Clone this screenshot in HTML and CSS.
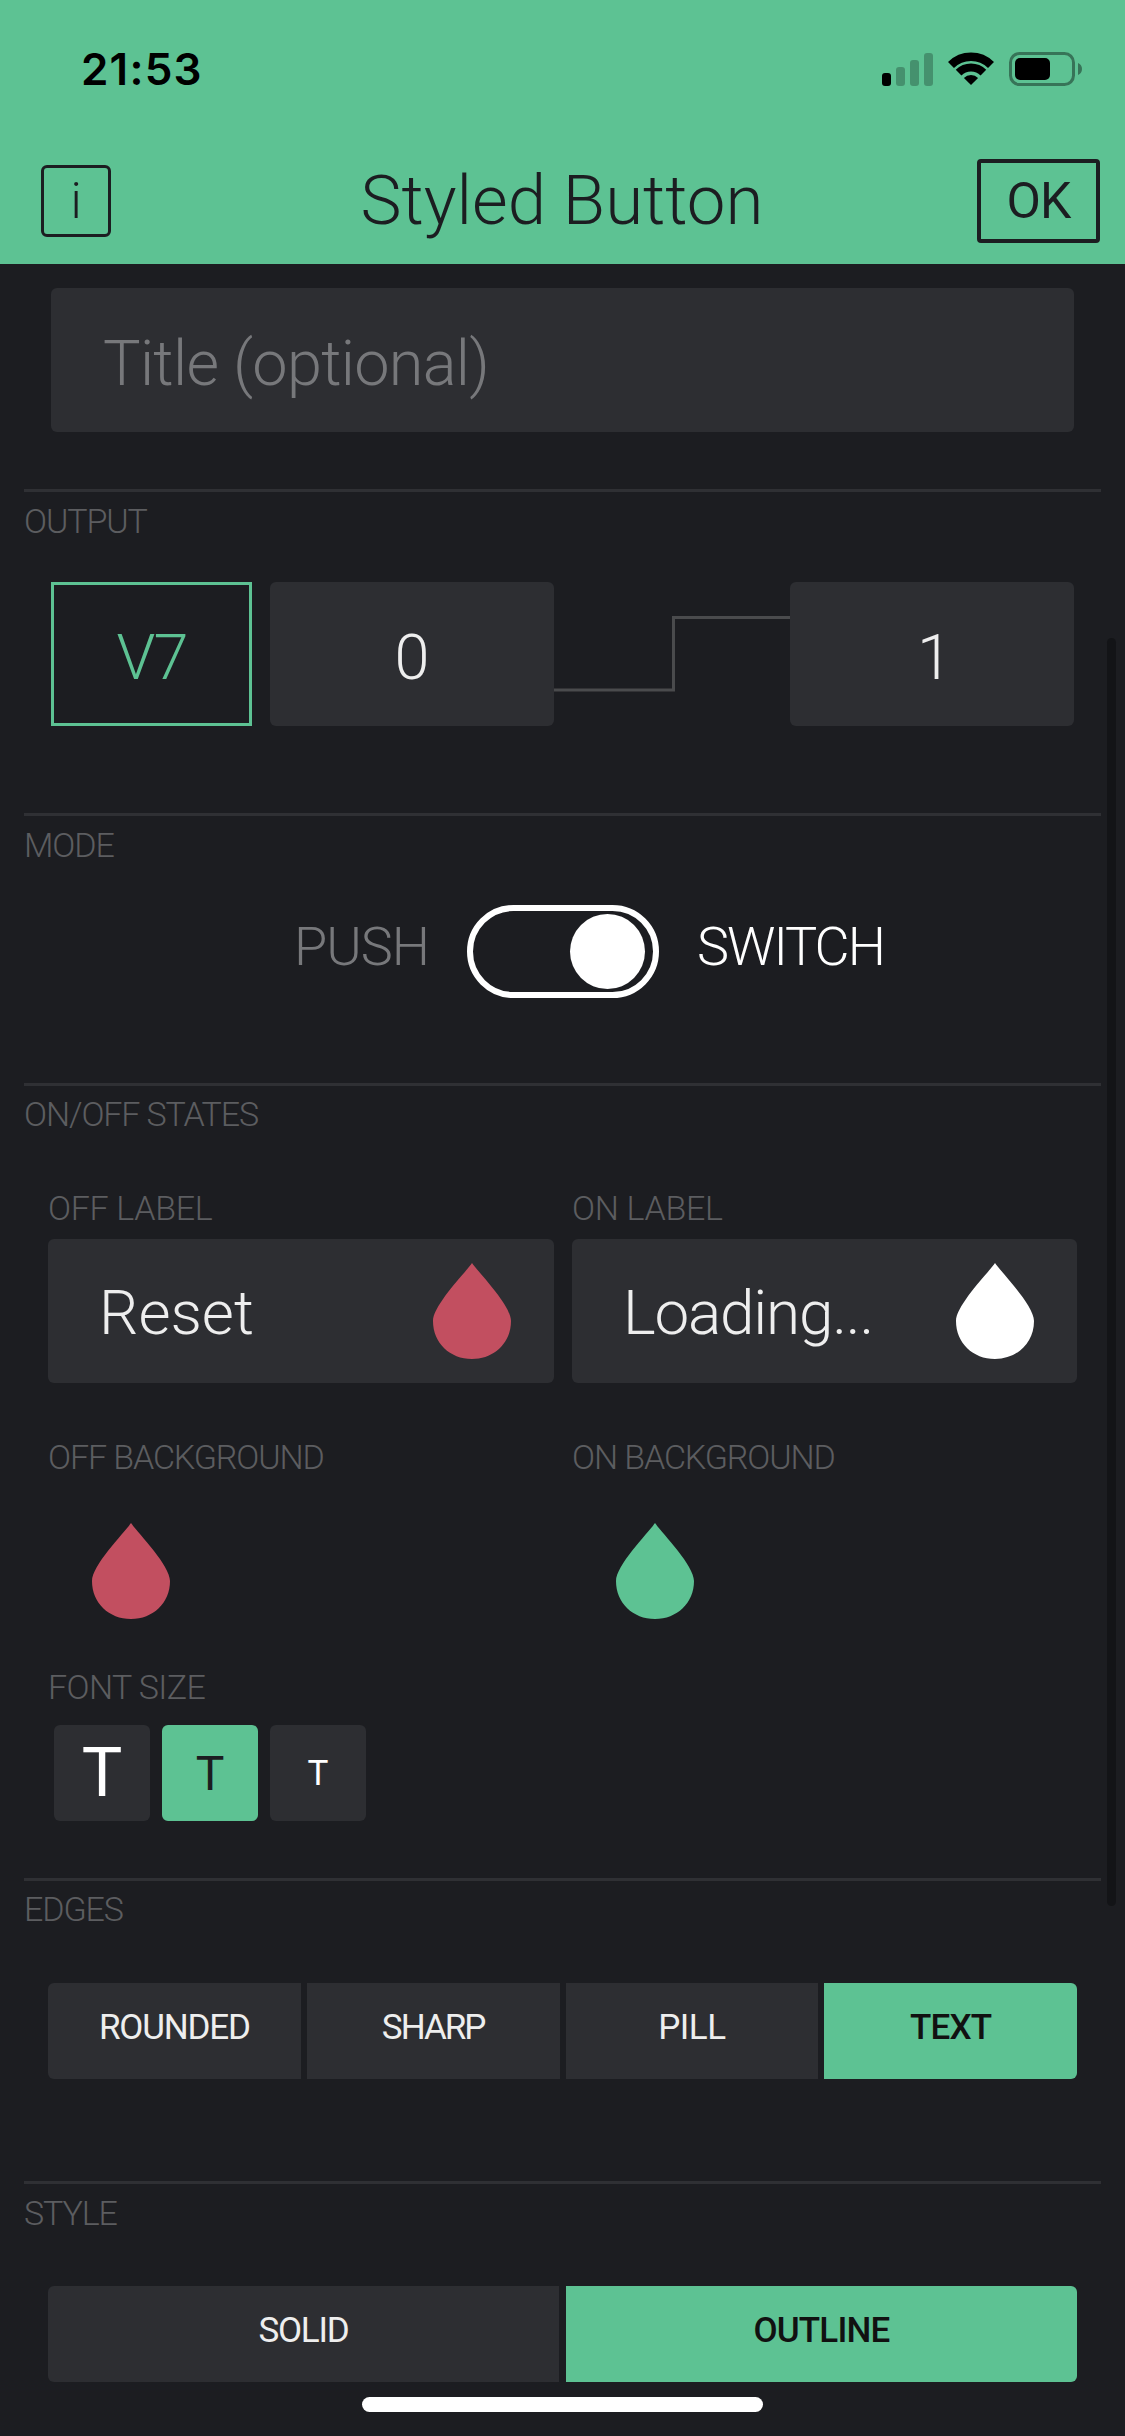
FILE: index.html
```html
<!DOCTYPE html>
<html lang="en">
<head>
<meta charset="utf-8">
<title>Styled Button</title>
<link rel="stylesheet" href="styles.css">
</head>
<body>
<div class="phone">
  <header class="top">
    <div class="status">
      <span class="time">21:53</span>
      <svg class="status-icons" width="200" height="34" viewBox="0 0 200 34" aria-hidden="true">
        <rect x="0" y="21" width="9" height="13" rx="3" fill="#000"/>
        <rect x="14" y="15" width="9" height="19" rx="3" fill="#000" fill-opacity=".25"/>
        <rect x="28" y="8" width="9" height="26" rx="3" fill="#000" fill-opacity=".25"/>
        <rect x="42" y="1" width="9" height="33" rx="3" fill="#000" fill-opacity=".25"/>
        <g transform="translate(66 0)">
          <path d="M3 13 A28.5 28.5 0 0 1 43 13" fill="none" stroke="#000" stroke-width="8.5"/>
          <path d="M10.6 20.6 A17.5 17.5 0 0 1 35.4 20.6" fill="none" stroke="#000" stroke-width="8"/>
          <path d="M23 33 L15.9 25.9 A10 10 0 0 1 30.1 25.9 Z" fill="#000"/>
        </g>
        <rect x="128.5" y="1.5" width="63" height="31" rx="9" fill="none" stroke="#000" stroke-opacity=".4" stroke-width="3"/>
        <rect x="133" y="6" width="35" height="22" rx="5" fill="#000"/>
        <path d="M196 11 C198.5 12 200 14 200 17 C200 20 198.500 22 196 23 Z" fill="#000" fill-opacity=".4"/>
      </svg>
    </div>
    <nav class="nav">
      <span class="info">i</span>
      <h1 class="title">Styled Button</h1>
      <span class="ok">OK</span>
    </nav>
  </header>

  <main class="content">
    <div class="title-input"><span>Title (optional)</span></div>

    <section class="section output">
      <h2 class="label">OUTPUT</h2>
      <div class="output-row">
        <div class="pin"><span>V7</span></div>
        <div class="cell val"><span>0</span></div>
        <svg class="wave" viewBox="0 0 237 144" preserveAspectRatio="none" aria-hidden="true">
          <path d="M0 108 H120 V35.500 H237" fill="none" stroke="#4a4b4d" stroke-width="3"/>
        </svg>
        <div class="cell val one"><span>1</span></div>
      </div>
    </section>

    <section class="section mode">
      <h2 class="label">MODE</h2>
      <div class="mode-row">
        <span class="mode-text off">PUSH</span>
        <div class="toggle"><span class="knob"></span></div>
        <span class="mode-text on">SWITCH</span>
      </div>
    </section>

    <section class="section states">
      <h2 class="label">ON/OFF STATES</h2>
      <div class="pair sub-first">
        <div class="sublabel">OFF LABEL</div>
        <div class="sublabel">ON LABEL</div>
      </div>
      <div class="pair fields">
        <div class="cell field"><span>Reset</span>
          <svg class="drop red" viewBox="0 0 78 96" aria-hidden="true"><path d="M39 0 C45 9 78 42 78 58 C78 80 61 96 39 96 C17 96 0 80 0 58 C0 42 33 9 39 0 Z"/></svg>
        </div>
        <div class="cell field loading"><span>Loading...</span>
          <svg class="drop white" viewBox="0 0 78 96" aria-hidden="true"><path d="M39 0 C45 9 78 42 78 58 C78 80 61 96 39 96 C17 96 0 80 0 58 C0 42 33 9 39 0 Z"/></svg>
        </div>
      </div>
      <div class="pair sub-second">
        <div class="sublabel">OFF BACKGROUND</div>
        <div class="sublabel">ON BACKGROUND</div>
      </div>
      <div class="pair bg-drops">
        <div><svg class="drop red" viewBox="0 0 78 96" aria-hidden="true"><path d="M39 0 C45 9 78 42 78 58 C78 80 61 96 39 96 C17 96 0 80 0 58 C0 42 33 9 39 0 Z"/></svg></div>
        <div><svg class="drop green" viewBox="0 0 78 96" aria-hidden="true"><path d="M39 0 C45 9 78 42 78 58 C78 80 61 96 39 96 C17 96 0 80 0 58 C0 42 33 9 39 0 Z"/></svg></div>
      </div>
      <div class="sublabel font-label">FONT SIZE</div>
      <div class="sizes">
        <div class="cell size lg">T</div>
        <div class="cell size md active">T</div>
        <div class="cell size sm">T</div>
      </div>
    </section>

    <section class="section edges">
      <h2 class="label">EDGES</h2>
      <div class="seg seg4">
        <div class="opt first">ROUNDED</div>
        <div class="opt tight">SHARP</div>
        <div class="opt loose">PILL</div>
        <div class="opt last active">TEXT</div>
      </div>
    </section>

    <section class="section style">
      <h2 class="label">STYLE</h2>
      <div class="seg seg2">
        <div class="opt first">SOLID</div>
        <div class="opt last active">OUTLINE</div>
      </div>
    </section>
  </main>

  <div class="scrollbar"></div>
  <div class="home"></div>
</div>
</body>
</html>
```
FILE: styles.css
```css
* { box-sizing: border-box; }
html, body { margin: 0; padding: 0; }
body { background: #1c1d21; }

.phone {
  position: relative;
  width: 1125px;
  height: 2436px;
  overflow: hidden;
  background: #1c1d21;
  color: #fff;
  font-family: Roboto, "Liberation Sans", sans-serif;
  font-weight: 300;
  font-stretch: 88%;
}

/* header */
.top { height: 264px; background: #5dc293; padding-top: 44px; color: #1c1d21; }
.status { display: flex; justify-content: space-between; align-items: center; height: 50px; padding: 0 43px 0 81px; color: #000; }
.time { font-family: Inter, "Liberation Sans", sans-serif; font-weight: 600; font-size: 44px; font-stretch: 100%; letter-spacing: 1.2px; }
.status-icons { display: block; }
.nav { display: grid; grid-template-columns: 1fr auto 1fr; align-items: center; height: 84px; margin-top: 65px; padding: 0 25px 0 41px; }
.info {
  justify-self: start; display: flex; align-items: center; justify-content: center;
  width: 70px; height: 72px; border: 3px solid #1c1d21; border-radius: 6px;
  font-size: 50px; line-height: 1;
}
.title { margin: 0 17px 0 0; font-size: 69px; font-weight: 300; line-height: 84px; white-space: nowrap; }
.ok {
  justify-self: end; display: flex; align-items: center; justify-content: center;
  width: 123px; height: 84px; border: 4px solid #1c1d21; border-radius: 4px;
  font-size: 50px; font-weight: 400; letter-spacing: -1px;
}

/* content */
.content { padding-top: 24px; }
.title-input {
  display: flex; align-items: center; height: 144px; margin: 0 51px; padding: 6px 0 0 52px;
  background: #2d2e32; border-radius: 6px; color: #77787b; font-size: 63px; letter-spacing: -.7px;
}
.section { margin: 0 24px; border-top: 3px solid #2f3034; }
.label { margin: 9px 0 0; font-size: 34px; font-weight: 300; line-height: 40px; color: #5c5d60; letter-spacing: -1.1px; }
.cell { background: #2d2e32; border-radius: 6px; }

.output { margin-top: 57px; }
.output-row { display: flex; height: 144px; margin: 41px 27px 0; }
.pin { display: flex; align-items: center; justify-content: center; width: 201px; padding-top: 7px; border: 3px solid #5dc293; color: #5dc293; font-size: 63px; letter-spacing: -2px; }
.val { display: flex; align-items: center; justify-content: center; width: 284px; padding-top: 6px; font-size: 63px; color: #eee; }
.val.one { padding-left: 5px; }
.pin + .val { margin-left: 18px; }
.wave { flex: 1; height: 144px; }

.mode { margin-top: 87px; }
.mode-row { display: flex; align-items: center; justify-content: center; gap: 38px; height: 93px; margin-top: 40px; padding-left: 53px; }
.mode-text { padding-bottom: 10px; font-size: 54px; }
.mode-text.off { color: #77787b; letter-spacing: -1px; }
.mode-text.on { letter-spacing: -2px; }
.toggle { display: flex; align-items: center; justify-content: flex-end; width: 192px; height: 93px; padding-right: 8px; border: 6px solid #fff; border-radius: 47px; }
.knob { width: 75px; height: 75px; border-radius: 50%; background: #fff; }

.states { margin-top: 85px; }
.states .label { margin-top: 8px; }
.pair { display: grid; grid-template-columns: 506px 505px; column-gap: 18px; margin: 0 24px; }
.sublabel { font-size: 34px; line-height: 40px; color: #5c5d60; letter-spacing: -.3px; }
.sub-first { margin-top: 54px; }
.fields { margin-top: 11px; }
.field { display: flex; align-items: center; justify-content: space-between; height: 144px; padding: 0 43px 0 51px; font-size: 62px; color: #eee; }
.field span { padding-top: 3px; }
.field.loading { letter-spacing: -1.2px; }
.sub-second { margin-top: 54px; }
.sub-second .sublabel { letter-spacing: -1.1px; }
.bg-drops { margin-top: 46px; padding-left: 44px; }
.drop { display: block; width: 78px; height: 96px; }
.red { fill: #c24f60; }
.white { fill: #fff; }
.green { fill: #5dc293; }
.font-label { margin: 48px 24px 0; letter-spacing: -.6px; }
.sizes { display: flex; gap: 12px; margin: 18px 30px 0; }
.size { display: flex; align-items: center; justify-content: center; width: 96px; height: 96px; }
.size.lg { font-size: 68px; font-weight: 400; }
.size.md { font-size: 48px; font-weight: 400; }
.size.sm { font-size: 35px; font-weight: 400; }
.size.active { background: #5dc293; color: #1c1d21; }

.edges { margin-top: 57px; }
.edges .label { margin-top: 8px; }
.style { margin-top: 102px; }
.seg { display: flex; height: 96px; margin: 54px 24px 0; }
.seg2 { margin-top: 53px; }
.seg4 { gap: 6px; }
.seg2 { gap: 7px; }
.opt { flex: 1; display: flex; align-items: center; justify-content: center; padding-bottom: 7px; background: #2d2e32; font-size: 35px; font-weight: 400; color: #eee; letter-spacing: -1.2px; }
.opt.tight { letter-spacing: -2px; }
.opt.loose { letter-spacing: -.5px; }
.opt.first { border-radius: 6px 0 0 6px; }
.opt.last { border-radius: 0 6px 6px 0; }
.opt.active { background: #5dc293; color: #111; font-weight: 500; letter-spacing: -.8px; }

/* overlays */
.scrollbar { position: absolute; left: 1107px; top: 638px; width: 9px; height: 1268px; border-radius: 5px; background: #131417; }
.home { position: absolute; left: 362px; top: 2397px; width: 401px; height: 15px; border-radius: 8px; background: #fff; }
```
